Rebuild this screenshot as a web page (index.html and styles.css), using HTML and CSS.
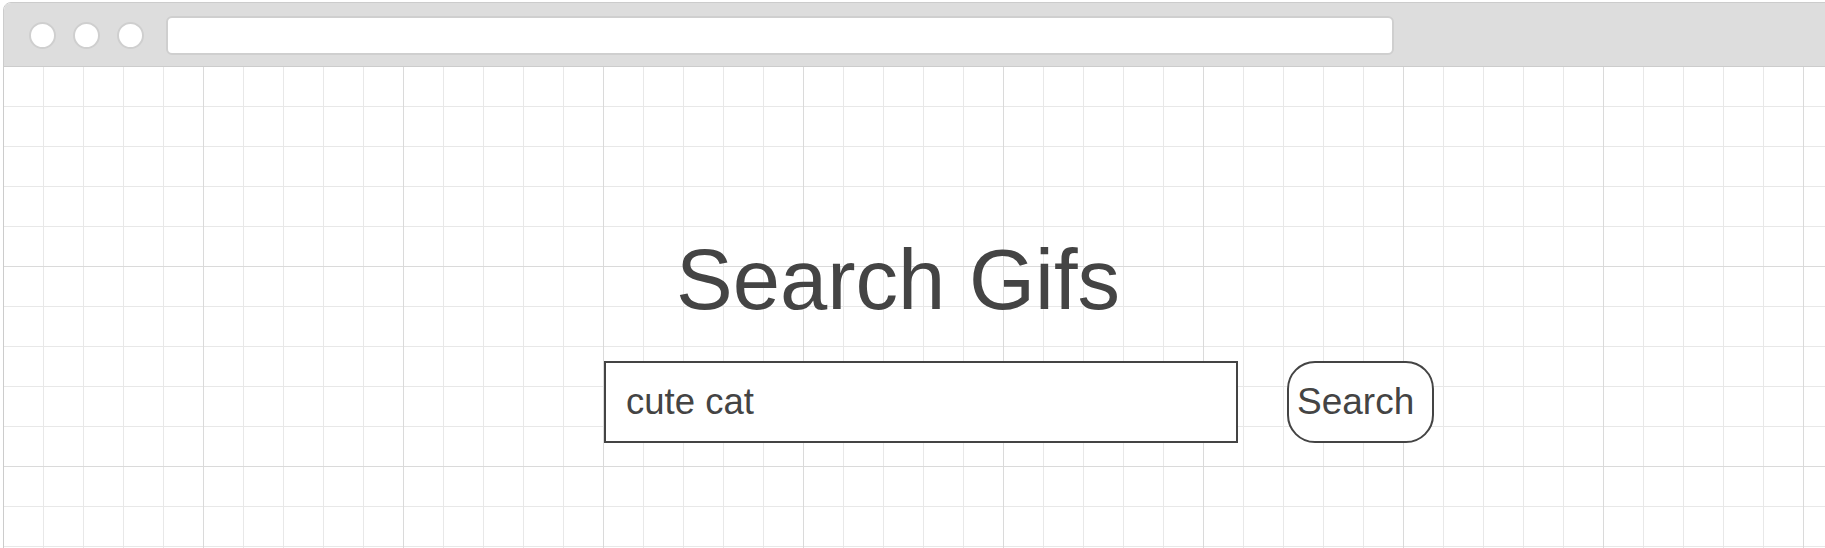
FILE: index.html
```html
<!DOCTYPE html>
<html lang="en">
<head>
<meta charset="utf-8">
<title>Search Gifs</title>
<link rel="stylesheet" href="styles.css">
</head>
<body>
<div class="window">
  <div class="titlebar">
    <div class="dots">
      <span class="dot"></span>
      <span class="dot"></span>
      <span class="dot"></span>
    </div>
    <div class="urlbar"></div>
  </div>
  <div class="canvas">
    <div class="hero">
      <h1 class="title">Search Gifs</h1>
      <form class="search" onsubmit="return false">
        <input class="search-input" type="text" value="cute cat">
        <button class="search-btn" type="button">Search</button>
      </form>
    </div>
  </div>
</div>
</body>
</html>
```

FILE: styles.css
```css
html, body {
  margin: 0;
  padding: 0;
  background: #ffffff;
  overflow: hidden;
  width: 1825px;
  height: 548px;
}

body {
  font-family: "Liberation Sans", Arial, sans-serif;
  color: #444444;
}

.window {
  margin: 2px 0 0 3px;
  width: 1860px;
  border: 1px solid #cccccc;
  border-radius: 8px 8px 0 0;
  overflow: hidden;
  background: #ffffff;
}

.titlebar {
  height: 63px;
  background: #dddddd;
  border-bottom: 1px solid #cccccc;
  display: flex;
  align-items: flex-start;
  padding-left: 25px;
}

.dots {
  display: flex;
  gap: 17px;
  margin-top: 19px;
}

.dot {
  flex: none;
  width: 23px;
  height: 23px;
  border-radius: 50%;
  background: #ffffff;
  border: 2px solid #cfcfcf;
}

.urlbar {
  flex: none;
  margin-left: 22px;
  margin-top: 13px;
  width: 1224px;
  height: 35px;
  background: #ffffff;
  border: 2px solid #cfcfcf;
  border-radius: 6px;
}

.canvas {
  height: 600px;
  background-color: #ffffff;
  background-image:
    linear-gradient(to right, transparent 199px, #dadada 199px, #dadada 200px),
    linear-gradient(to bottom, transparent 199px, #dadada 199px, #dadada 200px),
    linear-gradient(to right, transparent 39px, #e8e8e8 39px, #e8e8e8 40px),
    linear-gradient(to bottom, transparent 39px, #e8e8e8 39px, #e8e8e8 40px);
  background-size: 200px 200px, 200px 200px, 40px 40px, 40px 40px;
  padding-top: 170px;
  box-sizing: border-box;
}

.hero {
  margin-left: 600px;
  width: 834px;
}

.title {
  margin: 0 0 39px 72px;
  font-size: 85px;
  line-height: 1;
  font-weight: normal;
  color: #444444;
  white-space: nowrap;
}

.search {
  display: flex;
  gap: 49px;
  margin: 0;
}

.search-input {
  width: 634px;
  height: 82px;
  box-sizing: border-box;
  border: 2px solid #444444;
  border-radius: 0;
  padding: 0 0 0 20px;
  font-family: "Liberation Sans", Arial, sans-serif;
  font-size: 36.5px;
  color: #444444;
  background: #ffffff;
  outline: none;
}

.search-btn {
  width: 147px;
  height: 82px;
  box-sizing: border-box;
  border: 2px solid #444444;
  border-radius: 28px;
  background: #ffffff;
  padding: 0 0 0 8px;
  text-align: left;
  font-family: "Liberation Sans", Arial, sans-serif;
  font-size: 37px;
  color: #444444;
  cursor: pointer;
}
```
